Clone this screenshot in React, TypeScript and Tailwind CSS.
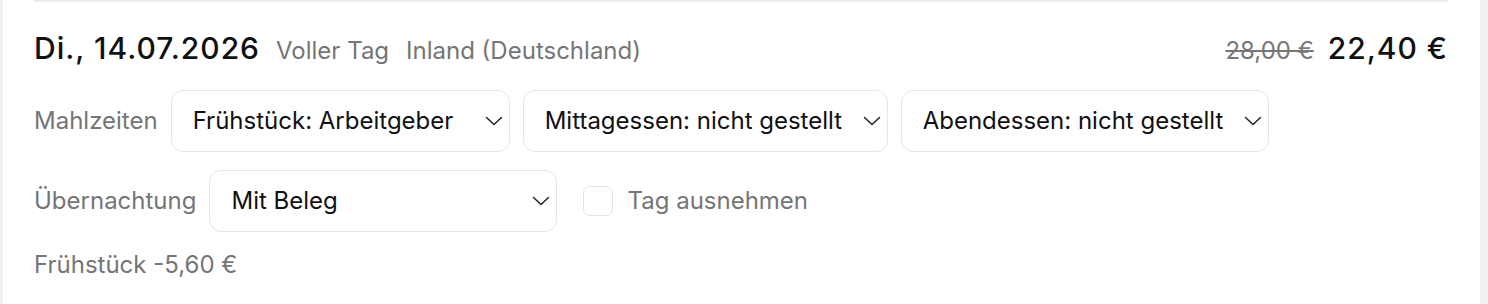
import React from "react";

function Chevron() {
  return (
    <svg width="18" height="10" viewBox="0 0 18 10" fill="none" stroke="#222" strokeWidth="1.5" strokeLinecap="round" strokeLinejoin="round">
      <path d="M1.5 1.5L9 8.5L16.5 1.5" />
    </svg>
  );
}

function Select({ label, width }: { label: string; width: string }) {
  return (
    <div className={`flex h-[62px] items-center justify-between rounded-[12px] border-[1.5px] border-[#e6e6e6] bg-white pl-[21px] pr-[6px] ${width}`}>
      <span className="text-[24px] leading-[32px] text-[#111]">{label}</span>
      <Chevron />
    </div>
  );
}

export default function App() {
  return (
    <div className="flex h-[304px] w-full bg-[#f0f0f0]" style={{ fontFamily: "Inter, 'Noto Sans', sans-serif" }}>
      <div className="ml-[3px] mr-[8px] flex-1 bg-white pl-[31px] pr-[32px]">
        <div className="h-[2px] bg-[#ececec]" />
        <div className="flex h-[36px] items-center justify-between mt-[28px]">
          <div className="flex items-baseline">
            <span className="text-[30px] leading-[36px] font-medium tracking-[1px] text-[#111]">Di., 14.07.2026</span>
            <span className="ml-[16px] text-[24px] leading-[32px] text-[#757575]">Voller Tag</span>
            <span className="ml-[17px] text-[24px] leading-[32px] text-[#757575]">Inland (Deutschland)</span>
          </div>
          <div className="flex items-baseline">
            <span className="text-[24px] leading-[32px] text-[#777] line-through">28,00 €</span>
            <span className="ml-[14px] text-[30px] leading-[36px] font-medium tracking-[1px] text-[#111]">22,40 €</span>
          </div>
        </div>
        <div className="mt-[24px] flex items-center gap-[13px]">
          <span className="text-[24px] leading-[32px] text-[#757575]">Mahlzeiten</span>
          <Select label="Frühstück: Arbeitgeber" width="w-[339px]" />
          <Select label="Mittagessen: nicht gestellt" width="w-[365px]" />
          <Select label="Abendessen: nicht gestellt" width="w-[368px]" />
        </div>
        <div className="mt-[18px] flex items-center">
          <span className="text-[24px] leading-[32px] text-[#757575]">Übernachtung</span>
          <div className="ml-[13px]"><Select label="Mit Beleg" width="w-[348px]" /></div>
          <div className="ml-[26px] h-[30px] w-[30px] rounded-[7px] border-[1.5px] border-[#e3e3e3] bg-white" />
          <span className="ml-[14px] text-[24px] leading-[32px] text-[#757575]">Tag ausnehmen</span>
        </div>
        <div className="mt-[17px] text-[24px] leading-[32px] text-[#757575]">Frühstück -5,60 €</div>
      </div>
    </div>
  );
}
